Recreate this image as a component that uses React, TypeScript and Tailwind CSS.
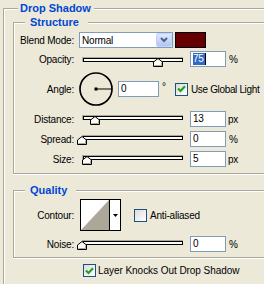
import React from "react";

function Header({ title, corner, titleCls }: { title: string; corner: string; titleCls: string }) {
  return (
    <div className="flex h-[13px]">
      <div className={`mt-[6px] h-[7px] shrink-0 border-l border-t border-[#aca899] shadow-[inset_1px_1px_0_#fff] ${corner}`} />
      <span className={`whitespace-nowrap text-[11px] font-bold leading-[13px] tracking-normal text-[#0046d5] ${titleCls}`}>{title}</span>
      <div className="mt-[6px] h-[2px] flex-1 border-t border-[#aca899] bg-white" />
    </div>
  );
}

function Label({ children }: { children: React.ReactNode }) {
  return <div className="w-[60px] shrink-0 whitespace-nowrap text-right">{children}</div>;
}

function Input({ w, children }: { w: string; children: React.ReactNode }) {
  return (
    <div className={`flex h-[16px] shrink-0 items-center border border-[#7f9db9] bg-white pl-[2px] leading-[14px] ${w}`}>
      {children}
    </div>
  );
}

function Thumb({ left, top }: { left: number; top: string }) {
  return (
    <svg
      width="10"
      height="9"
      viewBox="0 0 10 9"
      className={`absolute ${top}`}
      style={{ left }}
    >
      <polygon points="0.5,8.5 0.5,4 5,0.5 9.5,4 9.5,8.5" fill="#fbfbf7" stroke="#000" strokeWidth="1" />
      <polyline points="1.5,7.5 8.5,7.5 8.5,4.5" fill="none" stroke="#aca899" strokeWidth="1" />
    </svg>
  );
}

function Slider({ left, trackTop, thumbTop }: { left: number; trackTop: string; thumbTop: string }) {
  return (
    <div className="relative ml-[3px] h-[16px] w-[113px] shrink-0">
      <div className={`ml-[5px] h-[5px] w-[101px] border-l border-t border-[#aca899] ${trackTop}`}>
        <div className="h-full border border-black bg-[#fcfcf6]" />
      </div>
      <Thumb left={left} top={thumbTop} />
    </div>
  );
}

function Check({ checked }: { checked?: boolean }) {
  return (
    <div className="flex h-[13px] w-[13px] shrink-0 items-center justify-center border border-[#1c5180] bg-linear-to-br from-[#dcdcd7] to-white">
      {checked && (
        <svg width="9" height="8" viewBox="0 0 9 8">
          <polyline points="1,3.5 3.5,6 8,1.2" fill="none" stroke="#21a121" strokeWidth="2.2" />
        </svg>
      )}
    </div>
  );
}

function SliderRow({
  label,
  value,
  unit,
  left,
  trackTop,
  thumbTop,
  mt,
}: {
  label: string;
  value: React.ReactNode;
  unit: string;
  left: number;
  trackTop: string;
  thumbTop: string;
  mt: string;
}) {
  return (
    <div className={`flex h-[16px] items-center ${mt}`}>
      <Label>{label}</Label>
      <Slider left={left} trackTop={trackTop} thumbTop={thumbTop} />
      <Input w="w-[36px]">{value}</Input>
      <span className={unit === "px" ? "ml-[2px]" : "ml-[3px]"}>{unit}</span>
    </div>
  );
}

export default function App() {
  return (
    <div className="h-[284px] w-[264px] overflow-hidden bg-[#ece9d8] pl-[3px] pt-[2px] font-['Liberation_Sans',Arial,sans-serif] text-[10px] tracking-[-0.2px] text-black">
      <Header title="Drop Shadow" corner="w-[15px]" titleCls="pl-[2px] pr-[3px]" />
      <div className="h-[300px] border-l border-[#aca899] pl-[9px] pt-[1px] shadow-[inset_1px_0_0_#fff]">
        {/* Structure */}
        <Header title="Structure" corner="w-[12px]" titleCls="pl-[5px] pr-[9px]" />
        <div className="flex flex-col border-b border-l border-[#aca899] pb-[6px] pt-[3px] shadow-[inset_1px_0_0_#fff,0_1px_0_#fff]">
          <div className="flex h-[16px] items-center">
            <Label>Blend Mode:</Label>
            <div className="ml-[5px] flex h-[16px] w-[94px] shrink-0 items-center border border-[#7f9db9] bg-white">
              <span className="flex-1 pl-[2px]">Normal</span>
              <div className="flex h-[14px] w-[16px] items-center justify-center rounded-[2px] border border-[#c3d3fd] bg-linear-to-b from-[#dfe8fe] to-[#b2c5f4]">
                <svg width="8" height="6" viewBox="0 0 8 6">
                  <polyline points="1,1 4,4 7,1" fill="none" stroke="#4d6185" strokeWidth="2" />
                </svg>
              </div>
            </div>
            <div className="ml-[2px] h-[16px] w-[31px] shrink-0 border border-black bg-[#660000]" />
          </div>

          <SliderRow
            mt="mt-[3px]"
            label="Opacity:"
            unit="%"
            left={76}
            trackTop="mt-[6px]"
            thumbTop="top-[7px]"
            value={
              <span className="flex items-center">
                <span className="bg-[#316ac5] pr-[1px] leading-[12px] text-white">75</span>
                <span className="h-[12px] w-[1px] bg-black" />
              </span>
            }
          />

          <div className="mt-[5px] flex h-[34px] items-center">
            <Label>Angle:</Label>
            <svg width="34" height="34" viewBox="0 0 34 34" className="ml-[5px] shrink-0">
              <circle cx="17" cy="17" r="16" fill="none" stroke="#000" strokeWidth="1.7" />
              <rect x="15.5" y="15.5" width="3" height="3" fill="#000" />
              <line x1="17" y1="17" x2="33" y2="17" stroke="#000" strokeWidth="1" />
            </svg>
            <div className="ml-[5px]">
              <Input w="w-[41px]">0</Input>
            </div>
            <span className="ml-[3px] w-[13px] shrink-0 -translate-y-[3px]">°</span>
            <Check checked />
            <span className="ml-[3px] whitespace-nowrap tracking-[-0.35px]">Use Global Light</span>
          </div>

          <SliderRow mt="mt-[5px]" label="Distance:" unit="px" left={13} trackTop="mt-[4px]" thumbTop="top-[5px]" value="13" />
          <SliderRow mt="mt-[4px]" label="Spread:" unit="%" left={0} trackTop="mt-[4px]" thumbTop="top-[5px]" value="0" />
          <SliderRow mt="mt-[4px]" label="Size:" unit="px" left={5} trackTop="mt-[4px]" thumbTop="top-[5px]" value="5" />
        </div>

        {/* Quality */}
        <div className="mt-[10px]">
          <Header title="Quality" corner="w-[12px]" titleCls="pl-[5px] pr-[9px]" />
        </div>
        <div className="flex flex-col border-b border-l border-[#aca899] pb-[5px] pt-[2px] shadow-[inset_1px_0_0_#fff,0_1px_0_#fff]">
          <div className="flex h-[32px] items-center">
            <Label>Contour:</Label>
            <div className="ml-[6px] flex h-[32px] w-[41px] shrink-0 border border-black bg-white">
              <svg width="28" height="30" viewBox="0 0 28 30" className="block shrink-0">
                <polygon points="0,30 28,0 28,30" fill="#aca899" />
              </svg>
              <div className="flex flex-1 items-center justify-center border-l border-black">
                <svg width="5" height="3" viewBox="0 0 5 3">
                  <polygon points="0,0 5,0 2.5,3" fill="#000" />
                </svg>
              </div>
            </div>
            <div className="ml-[13px]">
              <Check />
            </div>
            <span className="ml-[3px] whitespace-nowrap">Anti-aliased</span>
          </div>
          <SliderRow mt="mt-[5px]" label="Noise:" unit="%" left={0} trackTop="mt-[4px]" thumbTop="top-[5px]" value="0" />
        </div>

        <div className="ml-[70px] mt-[6px] flex h-[13px] items-center">
          <Check checked />
          <span className="ml-[2px] whitespace-nowrap tracking-[-0.05px]">Layer Knocks Out Drop Shadow</span>
        </div>
      </div>
    </div>
  );
}
